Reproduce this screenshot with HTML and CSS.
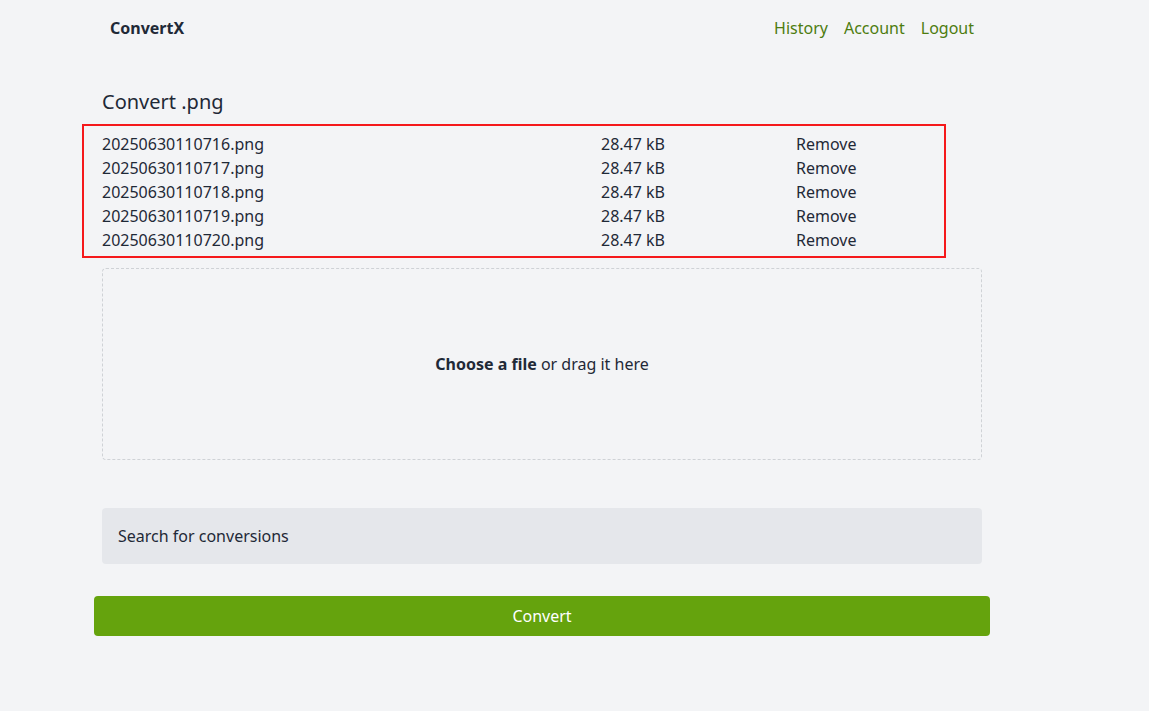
FILE: index.html
```html
<!DOCTYPE html>
<html lang="en">
<head>
  <meta charset="UTF-8" />
  <title>ConvertX</title>
  <link rel="stylesheet" href="styles.css">
</head>
<body>
  <header class="site-header">
    <nav class="nav">
      <a class="brand" href="#">ConvertX</a>
      <ul class="nav-links">
        <li><a href="#">History</a></li>
        <li><a href="#">Account</a></li>
        <li><a href="#">Logout</a></li>
      </ul>
    </nav>
  </header>

  <main class="container">
    <article class="convert-card">
      <h1 class="convert-title">Convert .png</h1>

      <div class="file-list-box">
        <table class="file-list">
          <tbody>
            <tr><td>20250630110716.png</td><td>28.47 kB</td><td><a href="#">Remove</a></td></tr>
            <tr><td>20250630110717.png</td><td>28.47 kB</td><td><a href="#">Remove</a></td></tr>
            <tr><td>20250630110718.png</td><td>28.47 kB</td><td><a href="#">Remove</a></td></tr>
            <tr><td>20250630110719.png</td><td>28.47 kB</td><td><a href="#">Remove</a></td></tr>
            <tr><td>20250630110720.png</td><td>28.47 kB</td><td><a href="#">Remove</a></td></tr>
          </tbody>
        </table>
      </div>

      <label class="dropzone">
        <span><strong>Choose a file</strong> or drag it here</span>
      </label>

      <div class="search-box">
        <input type="search" placeholder="Search for conversions" />
      </div>
    </article>

    <button class="convert-button">Convert</button>
  </main>
</body>
</html>
```

FILE: styles.css
```css
body {
  margin: 0;
  padding: 0;
  background-color: #f3f4f6;
  color: #1f2937;
  font-family: "Noto Sans", "Open Sans", sans-serif;
  font-size: 16px;
}

a {
  text-decoration: none;
  color: inherit;
}

.site-header {
  width: 896px;
  margin-left: 94px;
}

.nav {
  display: flex;
  justify-content: space-between;
  align-items: center;
  height: 56px;
  padding: 0 16px;
}

.brand {
  font-weight: bold;
  color: #1f2937;
}

.nav-links {
  display: flex;
  gap: 16px;
  margin: 0;
  padding: 0;
  list-style: none;
}

.nav-links a {
  color: #4d7c0f;
}

.container {
  width: 896px;
  margin-left: 94px;
}

.convert-card {
  padding: 30px 8px 0;
}

.convert-title {
  margin: 0 0 6px;
  font-size: 20px;
  font-weight: normal;
  line-height: 32px;
}

/* highlighted file list */
.file-list-box {
  margin: 0 0 10px -20px;
  width: 842px;
  border: 2px solid #f5191b;
  padding: 6px 0 4px 18px;
}

.file-list {
  border-collapse: collapse;
}

.file-list td {
  padding: 0;
  height: 24px;
  line-height: 24px;
}

.file-list td:nth-child(1) {
  width: 499px;
}

.file-list td:nth-child(2) {
  width: 195px;
}

.dropzone {
  display: flex;
  justify-content: center;
  align-items: center;
  height: 190px;
  border: 1px dashed #cfd2d6;
  border-radius: 4px;
  cursor: pointer;
}

.dropzone strong {
  font-weight: bold;
}

.search-box {
  margin-top: 48px;
}

.search-box input {
  display: block;
  box-sizing: border-box;
  width: 100%;
  height: 56px;
  padding: 0 16px;
  border: none;
  border-radius: 4px;
  background-color: #e5e7eb;
  font-family: inherit;
  font-size: 16px;
  color: #1f2937;
}

.search-box input::placeholder {
  color: #1f2937;
}

.convert-button {
  display: block;
  width: 100%;
  height: 40px;
  margin-top: 32px;
  border: none;
  border-radius: 4px;
  background-color: #65a30d;
  color: white;
  font-family: inherit;
  font-size: 16px;
  cursor: pointer;
}
```
